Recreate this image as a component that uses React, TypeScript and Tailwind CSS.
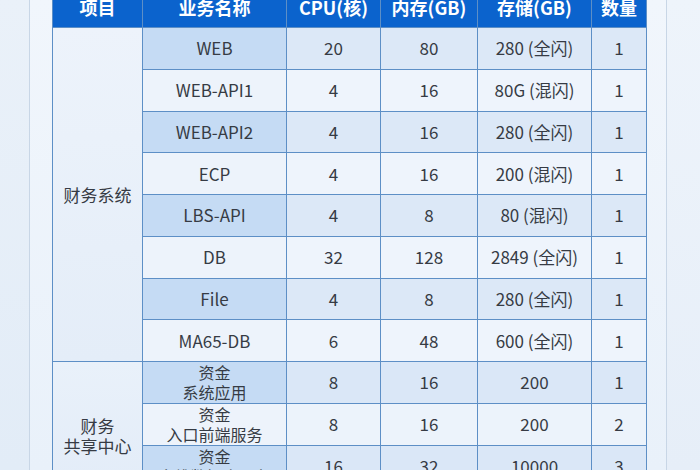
import React from 'react';

type Row = {
  name: string[];
  cpu: string;
  mem: string;
  disk: string;
  qty: string;
};

const finance: Row[] = [
  { name: ['WEB'], cpu: '20', mem: '80', disk: '280 (全闪)', qty: '1' },
  { name: ['WEB-API1'], cpu: '4', mem: '16', disk: '80G (混闪)', qty: '1' },
  { name: ['WEB-API2'], cpu: '4', mem: '16', disk: '280 (全闪)', qty: '1' },
  { name: ['ECP'], cpu: '4', mem: '16', disk: '200 (混闪)', qty: '1' },
  { name: ['LBS-API'], cpu: '4', mem: '8', disk: '80 (混闪)', qty: '1' },
  { name: ['DB'], cpu: '32', mem: '128', disk: '2849 (全闪)', qty: '1' },
  { name: ['File'], cpu: '4', mem: '8', disk: '280 (全闪)', qty: '1' },
  { name: ['MA65-DB'], cpu: '6', mem: '48', disk: '600 (全闪)', qty: '1' },
];

const shared: Row[] = [
  { name: ['资金', '系统应用'], cpu: '8', mem: '16', disk: '200', qty: '1' },
  { name: ['资金', '入口前端服务'], cpu: '8', mem: '16', disk: '200', qty: '2' },
  { name: ['资金', '多维数据库服务'], cpu: '16', mem: '32', disk: '10000', qty: '3' },
];

const headers = ['项目', '业务名称', 'CPU(核)', '内存(GB)', '存储(GB)', '数量'];

const cell = 'flex flex-col items-center justify-center text-center leading-[20px] whitespace-nowrap';

const App = () => {
  return (
    <div className="w-[700px] h-[470px] overflow-hidden flex bg-[#e9f1fa] font-['Noto_Sans_CJK_SC','Noto_Sans',sans-serif] text-[17px] text-[#363b44]">
      <div className="w-[29px] shrink-0 bg-gradient-to-b from-[#eaf1f9] to-[#e2ecf7]" />
      <div className="w-[638px] shrink-0 border-x border-[#c8d6e6] bg-gradient-to-b from-[#f1f6fc] to-[#e9f1fa] pl-[22px]">
        <div className="-mt-[14px] w-[595px] grid grid-cols-[89px_143px_93px_96px_113px_54px] grid-rows-[40px_repeat(11,40.75px)] gap-px bg-[#5d8fc6] border border-[#5d8fc6]">
          {headers.map((h) => (
            <div key={h} className={`${cell} bg-[#0b63cd] text-white font-bold text-[18px]`}>
              {h}
            </div>
          ))}

          <div className={`${cell} row-span-8 bg-gradient-to-b from-[#edf3fb] to-[#e4edf8]`}>财务系统</div>
          {finance.map((r, i) => (
            <React.Fragment key={r.name.join('')}>
              <div className={`${cell} col-start-2 ${i % 2 === 0 ? 'bg-[#c5dbf4]' : 'bg-[#edf3fb]'}`}>
                {r.name.map((n) => (
                  <span key={n}>{n}</span>
                ))}
              </div>
              {[r.cpu, r.mem, r.disk, r.qty].map((v, j) => (
                <div key={j} className={`${cell} ${i % 2 === 0 ? 'bg-[#dce8f7]' : 'bg-[#eef4fc]'}`}>
                  {v}
                </div>
              ))}
            </React.Fragment>
          ))}

          <div className={`${cell} row-span-3 bg-gradient-to-b from-[#e9f1fa] to-[#e3ecf8] pt-[24px]`}>
            <span>财务</span>
            <span>共享中心</span>
          </div>
          {shared.map((r, i) => (
            <React.Fragment key={r.name.join('')}>
              <div className={`${cell} col-start-2 text-[16px] ${i % 2 === 0 ? 'bg-[#c5dbf4]' : 'bg-[#edf3fb]'}`}>
                {r.name.map((n) => (
                  <span key={n}>{n}</span>
                ))}
              </div>
              {[r.cpu, r.mem, r.disk, r.qty].map((v, j) => (
                <div key={j} className={`${cell} ${i % 2 === 0 ? 'bg-[#dae7f7]' : 'bg-[#ecf3fb]'}`}>
                  {v}
                </div>
              ))}
            </React.Fragment>
          ))}
        </div>
      </div>
      <div className="flex-1 bg-gradient-to-b from-[#eef4fb] to-[#e6eef8]" />
    </div>
  );
};

export default App;
